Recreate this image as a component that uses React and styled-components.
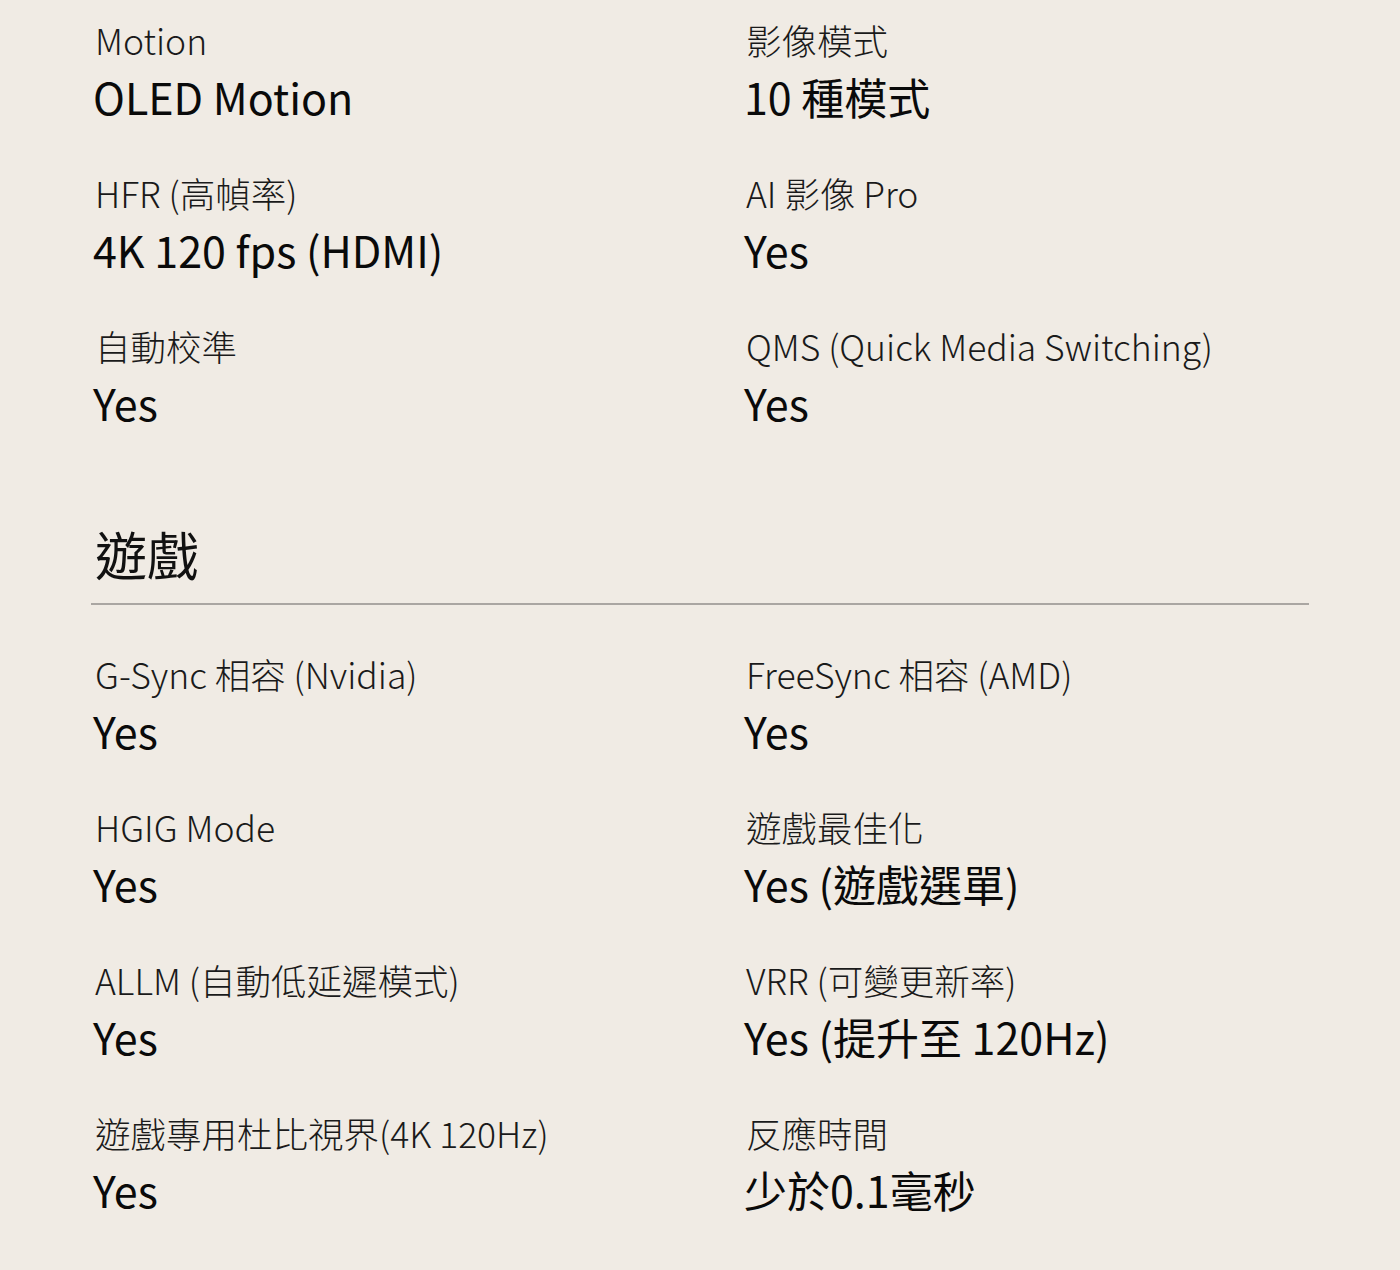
import styled, { createGlobalStyle } from "styled-components";

const GlobalStyle = createGlobalStyle`
  body {
    margin: 0;
    background: #f0ebe4;
    font-family: "Noto Sans CJK TC", "Noto Sans", sans-serif;
    color: #111;
  }
`;

const motionSpecs = [
  { label: "Motion", value: "OLED Motion" },
  { label: "影像模式", value: "10 種模式" },
  { label: "HFR (高幀率)", value: "4K 120 fps (HDMI)" },
  { label: "AI 影像 Pro", value: "Yes" },
  { label: "自動校準", value: "Yes" },
  { label: "QMS (Quick Media Switching)", value: "Yes" },
];

const gameSpecs = [
  { label: "G-Sync 相容 (Nvidia)", value: "Yes" },
  { label: "FreeSync 相容 (AMD)", value: "Yes" },
  { label: "HGIG Mode", value: "Yes" },
  { label: "遊戲最佳化", value: "Yes (遊戲選單)" },
  { label: "ALLM (自動低延遲模式)", value: "Yes" },
  { label: "VRR (可變更新率)", value: "Yes (提升至 120Hz)" },
  { label: "遊戲專用杜比視界(4K 120Hz)", value: "Yes" },
  { label: "反應時間", value: "少於0.1毫秒" },
];

const App = () => {
  return (
    <Page>
      <GlobalStyle />
      <SpecGrid>
        {motionSpecs.map((s) => (
          <Spec key={s.label}>
            <Label>{s.label}</Label>
            <Value>{s.value}</Value>
          </Spec>
        ))}
      </SpecGrid>
      {/* game section */}
      <Heading>遊戲</Heading>
      <Divider />
      <SpecGrid>
        {gameSpecs.map((s) => (
          <Spec key={s.label}>
            <Label>{s.label}</Label>
            <Value>{s.value}</Value>
          </Spec>
        ))}
      </SpecGrid>
    </Page>
  );
};

const Page = styled.main`
  width: 1218px;
  margin-left: 91px;
  padding-top: 16px;
  height: 1254px;
`;

const SpecGrid = styled.div`
  display: grid;
  grid-template-columns: 651px 1fr;
  row-gap: 47px;
  padding-left: 4px;
`;

const Spec = styled.div`
  display: flex;
  flex-direction: column;
  gap: 6px;
`;

const Label = styled.div`
  font-size: 35.5px;
  font-weight: 300;
  line-height: 48px;
  color: #1a1a1a;
`;

const Value = styled.div`
  font-size: 43px;
  font-weight: 400;
  line-height: 52px;
  color: #0a0a0a;
  margin-left: -2px;
`;

const Heading = styled.h2`
  margin: 94px 0 0 4px;
  font-size: 52px;
  font-weight: 400;
  line-height: 64px;
`;

const Divider = styled.hr`
  margin: 17px 0 45px;
  border: 0;
  height: 2px;
  background: #aaa6a2;
`;

export default App;
